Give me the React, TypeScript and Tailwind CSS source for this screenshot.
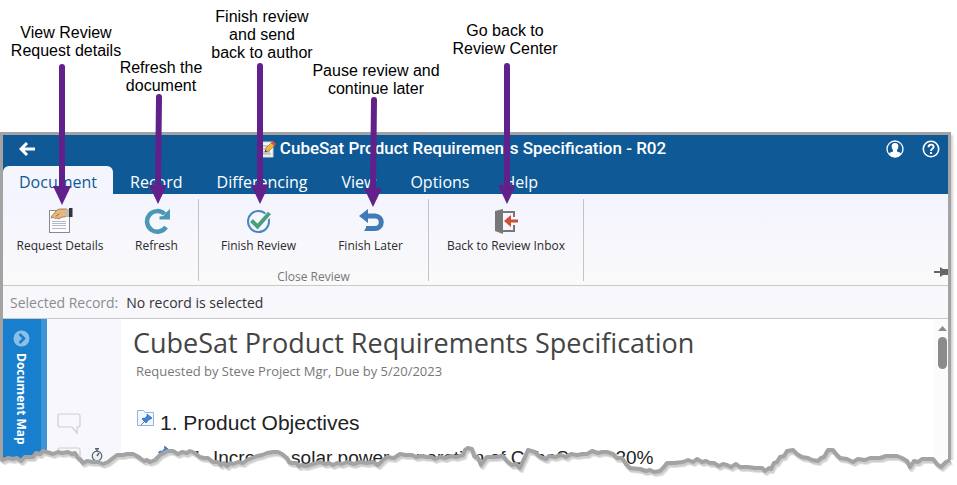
import type { ReactNode } from "react";

const TABS = ["Document", "Record", "Differencing", "View", "Options", "Help"];

const CALLOUTS = [
  { place: "left-[6px] top-[24px] w-[120px]", lines: ["View Review", "Request details"] },
  { place: "left-[101px] top-[59px] w-[120px]", lines: ["Refresh the", "document"] },
  { place: "left-[202px] top-[8px] w-[120px]", lines: ["Finish review", "and send", "back to author"] },
  { place: "left-[306px] top-[62px] w-[140px]", lines: ["Pause review and", "continue later"] },
  { place: "left-[445px] top-[22px] w-[120px]", lines: ["Go back to", "Review Center"] },
];

const ARROWS = [
  { x1: 62, y1: 67, x2: 62, tip: 204 },
  { x1: 159, y1: 97, x2: 158, tip: 203 },
  { x1: 260, y1: 66, x2: 260, tip: 203 },
  { x1: 374, y1: 100, x2: 373, tip: 206 },
  { x1: 507, y1: 66, x2: 507, tip: 203 },
];

const TEAR =
  "M0 18 3 20 8 18 13 19 17 18 21 21 25 17 33 17 36 13 40 14 43 11 50 13 53 14 58 12 62 13 68 12 72 14 75 13 78 18 80 19 83 23 87 21 93 22 98 22 103 24 108 22 113 18 117 15 123 15 127 14 133 14 137 16 140 18 144 21 147 20 150 22 155 20 158 17 160 15 164 13 168 11 173 11 178 14 182 12 187 13 190 11 195 13 200 17 204 18 208 18 213 22 218 22 221 25 224 23 227 26 230 23 233 24 238 22 243 23 247 20 252 18 257 16 262 15 267 13 273 12 278 12 282 14 287 18 289 22 292 23 296 23 299 26 302 25 306 26 313 24 320 22 325 24 329 23 333 25 337 23 342 24 347 22 354 24 360 22 367 23 373 22 378 25 383 20 387 17 394 18 400 14 406 15 412 15 416 17 422 16 427 17 431 17 435 19 440 17 445 18 451 16 456 17 463 15 465 10 468 8 472 9 474 16 478 18 481 25 485 19 487 17 495 17 503 16 507 21 512 25 516 24 520 28 523 21 525 17 528 10 535 12 539 16 543 18 546 19 549 16 555 17 561 15 566 17 571 14 577 15 583 14 587 14 592 11 598 13 602 12 607 12 613 14 617 18 622 18 626 24 630 28 640 29 646 31 650 30 654 32 660 31 664 27 667 23 674 23 683 22 688 20 693 22 697 19 702 22 706 21 710 23 714 23 719 26 723 24 727 25 731 27 736 24 740 27 748 27 755 28 762 28 765 31 769 28 771 29 774 23 777 22 780 17 784 16 787 11 793 10 797 14 802 17 808 18 812 20 818 21 821 18 824 17 828 10 833 10 836 14 840 18 847 19 853 22 858 19 865 20 870 18 880 18 886 16 897 16 902 18 907 21 910 27 914 21 918 22 922 19 933 19 937 24 941 27 946 22 950 20";

function Callouts() {
  return (
    <section className="relative h-[132px] font-['Liberation_Sans',Arial,sans-serif] text-base leading-[18px] text-black">
      {CALLOUTS.map((c) => (
        <p key={c.lines[0]} className={`absolute text-center ${c.place}`}>
          {c.lines.map((l) => (
            <span key={l} className="block whitespace-nowrap">{l}</span>
          ))}
        </p>
      ))}
    </section>
  );
}

function Arrows() {
  return (
    <svg className="pointer-events-none absolute top-0 left-0 z-20" width="560" height="210" fill="#62208b" aria-hidden="true">
      {ARROWS.map((a) => (
        <g key={a.x1}>
          <line x1={a.x1} y1={a.y1} x2={a.x2} y2={a.tip - 16} stroke="#62208b" strokeWidth="6" strokeLinecap="round" />
          <path d={`M${a.x2 - 9} ${a.tip - 18}h18l-9 19z`} />
        </g>
      ))}
    </svg>
  );
}

function RequestIcon() {
  return (
    <svg width="26" height="26" viewBox="0 0 26 26" aria-hidden="true">
      <rect x="2.500" y="2.500" width="20" height="22" fill="#fdfdfd" stroke="#8a8a8a" />
      <path d="M5 13.500h14M5 15.500h14M5 17.500h14M5 20.500h14" stroke="#b3b8cf" strokeWidth="1" />
      <path d="M4 9.500c.5-2 3-3.500 5-6.500 1-1.500 3-2 5-2h6v7c-2 1-3 1-4 1l-2 .5-2 1.500-2-1-2 .5-1-1-2 .5z" fill="#e8b780" stroke="#9a6a3a" strokeWidth=".8" />
      <path d="M9 8.500l3-3" stroke="#8d5b2d" fill="none" />
      <path d="M19 1h3v8h-3z" fill="#b8bcc4" />
      <path d="M22 0h3.500v9H22z" fill="#333" />
    </svg>
  );
}

function RefreshIcon() {
  return (
    <svg width="26" height="26" viewBox="0 0 26 26" aria-hidden="true">
      <path d="M20.500 6A10.300 10.300 0 1 0 22 19" fill="none" stroke="#4b98b6" strokeWidth="4.500" />
      <path d="M26 1v10.500H15.500V8.500l4 -.5 2-3z" fill="#4b98b6" />
    </svg>
  );
}

function FinishIcon() {
  return (
    <svg width="26" height="26" viewBox="0 0 26 26" fill="none" aria-hidden="true">
      <circle cx="12.500" cy="13.500" r="10.500" stroke="#4a86c5" strokeWidth="2" />
      <path d="M6 13l5.500 5.500L24 5" stroke="#f5f6fd" strokeWidth="6" />
      <path d="M5.500 12.500l6 6L23.500 5" stroke="#4a9f7d" strokeWidth="4" />
    </svg>
  );
}

function LaterIcon() {
  return (
    <svg width="26" height="26" viewBox="0 0 26 26" aria-hidden="true">
      <path d="M8 8h9a6 6 0 0 1 0 12.500H8" fill="none" stroke="#3f7bb6" strokeWidth="5" />
      <path d="M1 8l9-7v14z" fill="#3f7bb6" />
      <path d="M9 18h5v5H6z" fill="#3f7bb6" />
    </svg>
  );
}

function InboxIcon() {
  return (
    <svg width="26" height="26" viewBox="0 0 26 26" aria-hidden="true">
      <path d="M10 4h11v5M21 17v6H10" fill="none" stroke="#777" strokeWidth="2" />
      <path d="M2 3l8-2v25l-8-3z" fill="#777" />
      <path d="M11 13l7-6v4.500h7v3h-7V19z" fill="#cf4f35" />
    </svg>
  );
}

function RibbonButton({ icon, label, className }: { icon: ReactNode; label: string; className: string }) {
  return (
    <button type="button" className={`flex flex-col items-center gap-1 text-xs leading-4 whitespace-nowrap text-[#2b2b2b] ${className}`}>
      {icon}
      {label}
    </button>
  );
}

function Header() {
  return (
    <header className="bg-[#0f5a96] text-white">
      <div className="flex h-[31px] items-center">
        <button type="button" aria-label="Back" className="ml-4 w-[30px]">
          <svg width="18" height="18" viewBox="0 0 18 18" fill="none" stroke="#fff" strokeWidth="3" aria-hidden="true">
            <path d="M16 7H3M8 1L2 7l6 6" />
          </svg>
        </button>
        <h1 className="flex flex-1 items-center justify-center gap-1 pr-[42px] pb-[3px] pl-8 font-[Roboto,sans-serif] text-[17px] font-medium whitespace-nowrap">
          <svg width="17" height="18" viewBox="0 0 17 18" aria-hidden="true">
            <path d="M1 2h13v15H1z" fill="#f6f6f2" stroke="#cfd3d8" />
            <path d="M3 6h6M3 9h5M3 12h8M3 14h9" stroke="#8b99a6" />
            <path d="M6 12l1-4 6-6 3 3-6 6z" fill="#efb73e" stroke="#936820" strokeWidth=".6" />
            <path d="M12 3l2-2 3 3-2 2z" fill="#e34b3d" />
            <path d="M6 12l.5-2 1.500 1.500z" fill="#222" />
          </svg>
          CubeSat Product Requirements Specification - R02
        </h1>
        <div className="flex gap-[18px] pr-2 pb-1">
          <button type="button" aria-label="Account">
            <svg width="18" height="18" viewBox="0 0 18 18" aria-hidden="true">
              <circle cx="9" cy="9" r="8" fill="none" stroke="#fff" strokeWidth="1.300" />
              <path d="M9 3c2.500 0 3.500 1.500 3.300 4-.1 1.500-.8 2.400-1.300 3v1.500l4 1.500c-1.500 3-3.500 4-6 4s-4.500-1-6-4l4-1.500V10C6.500 9.400 5.800 8.500 5.700 7 5.500 4.500 6.500 3 9 3z" fill="#fff" />
            </svg>
          </button>
          <button type="button" aria-label="Help">
            <svg width="18" height="18" viewBox="0 0 18 18" fill="none" stroke="#fff" aria-hidden="true">
              <circle cx="9" cy="9" r="7.700" strokeWidth="1.600" />
              <path d="M6.500 7.200C6.500 3.700 11.600 3.900 11.600 7c0 1.800-2.600 1.900-2.600 4M9 12v2" strokeWidth="1.900" />
            </svg>
          </button>
        </div>
      </div>
      <nav className="flex h-7 text-base leading-7">
        {TABS.map((t, i) => (
          <button
            key={t}
            type="button"
            className={i === 0 ? "rounded-t-md bg-[#f5f5fe] px-4 pt-[2px] text-[#0f5a96]" : "px-[17px] pt-[2px]"}
          >
            {t}
          </button>
        ))}
      </nav>
    </header>
  );
}

function Ribbon() {
  return (
    <div className="flex h-[92px] border-b border-[#c8c8c8] bg-linear-to-b from-[#f4f4ff] to-[#fafafa] pt-[5px] pb-1">
      <div className="flex w-[196px] items-start border-r border-[#c4c4c4] pt-[9px]">
        <RibbonButton icon={<RequestIcon />} label="Request Details" className="w-[114px]" />
        <RibbonButton icon={<RefreshIcon />} label="Refresh" className="w-[79px]" />
      </div>
      <div className="flex w-[230px] flex-col border-r border-[#c4c4c4] pt-[9px]">
        <div className="flex">
          <RibbonButton icon={<FinishIcon />} label="Finish Review" className="w-[119px]" />
          <RibbonButton icon={<LaterIcon />} label="Finish Later" className="w-[105px]" />
        </div>
        <span className="mt-[15px] text-center text-xs leading-4 text-[#777]">Close Review</span>
      </div>
      <div className="flex w-[155px] items-start justify-center border-r border-[#c4c4c4] pt-[9px]">
        <RibbonButton icon={<InboxIcon />} label="Back to Review Inbox" className="w-[150px]" />
      </div>
      <button type="button" aria-label="Pin the ribbon" className="ml-auto self-end pb-1">
        <svg width="14" height="10" viewBox="0 0 14 10" fill="#666" aria-hidden="true">
          <path d="M0 4h6V0l3 2h5v6H9l-3 2V6H0z" />
        </svg>
      </button>
    </div>
  );
}

function CommentIcon() {
  return (
    <svg width="24" height="22" viewBox="0 0 24 22" fill="none" stroke="#cfcfcf" strokeWidth="1.200" aria-hidden="true">
      <path d="M3 1h18q2 0 2 2v9q0 2-2 2h-1v6l-5-6H3q-2 0-2-2V3q0-2 2-2z" />
    </svg>
  );
}

function Pin() {
  return (
    <g>
      <path d="M1 12l4-4" stroke="#777" strokeWidth="1" />
      <path d="M7 1l5 4-1 1-2 .5L7 9 6 10 2 6l1-1 2 .2L7 3z" fill="#3f82dc" stroke="#1e5fb8" strokeWidth=".6" />
    </g>
  );
}

function DocumentBody() {
  return (
    <div className="flex h-[158px] bg-white">
      <button type="button" className="flex w-11 shrink-0 flex-col items-center gap-[6px] border-r-[6px] border-[#3d95d8] bg-[#177fce] pt-[11px] pr-[2px] text-white">
        <svg width="17" height="17" viewBox="0 0 17 17" aria-hidden="true">
          <circle cx="8.500" cy="8.500" r="8" fill="#8bbfe8" />
          <path d="M6.500 4l4.500 4.500L6.500 13" fill="none" stroke="#177fce" strokeWidth="2.500" />
        </svg>
        <span className="text-xs leading-4 font-bold whitespace-nowrap [writing-mode:vertical-rl]">Document Map</span>
      </button>
      <div className="w-[74px] shrink-0 bg-[#f7f7fd] pt-[94px] pl-[10px]">
        <CommentIcon />
        <div className="mt-3 flex gap-[10px]">
          <CommentIcon />
          <svg width="12" height="14" viewBox="0 0 12 14" fill="none" stroke="#59626b" className="mt-px" aria-hidden="true">
            <circle cx="6" cy="8" r="4.800" fill="#e8f1f6" strokeWidth="1.200" />
            <path d="M4 .8h4M6 1v3M6 8l2-3" strokeWidth="1.400" />
          </svg>
        </div>
      </div>
      <article className="min-w-0 flex-1 pt-[6px] pl-3 whitespace-nowrap">
        <h2 className="text-[27px] leading-9 text-[#444]">CubeSat Product Requirements Specification</h2>
        <p className="pt-[2px] pl-[3px] text-[13px] leading-4 text-[#777]">Requested by Steve Project Mgr, Due by 5/20/2023</p>
        <h3 className="mt-[31px] flex gap-[6px] pl-1 font-['Liberation_Sans',Arial,sans-serif] text-[21px] leading-[26px] text-[#222]">
          <svg width="17" height="17" viewBox="0 0 17 17" aria-hidden="true">
            <path d="M.5 3.500v-3h6l1.500 2h8.500v13H.5z" fill="#f3f8fe" stroke="#8fb4e3" />
            <g transform="translate(3 3)"><Pin /></g>
          </svg>
          1. Product Objectives
        </h3>
        <h4 className="mt-[9px] flex gap-1 pl-[23px] font-['Liberation_Sans',Arial,sans-serif] text-[19px] leading-[26px] text-[#222]">
          <svg width="16" height="16" viewBox="0 0 13 13" aria-hidden="true"><Pin /></svg>
          1.1. Increase solar power generation of CubeSat by 20%
        </h4>
      </article>
      <div className="flex w-[15px] flex-col items-center gap-[6px] bg-[#fbfbfb] pt-[7px] pl-1" aria-hidden="true">
        <svg width="9" height="5" viewBox="0 0 9 5" fill="#8b8b8b"><path d="M0 5l4.500-5L9 5z" /></svg>
        <div className="h-8 w-[9px] rounded-full bg-[#8b8b8b]" />
      </div>
    </div>
  );
}

function TornEdge() {
  return (
    <svg className="pointer-events-none absolute bottom-0 left-0 z-10 h-[45px] w-full" viewBox="0 0 957 45" preserveAspectRatio="none" fill="none" strokeLinejoin="round" aria-hidden="true">
      <path d={`${TEAR}H957V45H0z`} fill="#fff" />
      <path d={TEAR} transform="translate(2 3)" stroke="#e2e2e2" strokeWidth="4" />
      <path d={TEAR} transform="translate(1 2)" stroke="#cdcdcd" strokeWidth="4" />
      <path d={TEAR} stroke="#a3a3a3" strokeWidth="4" />
    </svg>
  );
}

export default function App() {
  return (
    <div className="relative overflow-hidden bg-white font-['Open_Sans','Noto_Sans',sans-serif]">
      <Callouts />
      <main className="mr-[6px] border-x-[3px] border-t-[3px] border-[#a3a3a3] shadow-[2px_3px_2px_#d4d4d4]">
        <Header />
        <Ribbon />
        <div className="flex h-[33px] items-center gap-2 border-b border-[#c8c8c8] bg-[#f7f7fc] px-[7px] pt-px text-sm">
          <span className="text-[#8c8c8c]">Selected Record:</span>
          <span className="text-[#333]">No record is selected</span>
        </div>
        <DocumentBody />
      </main>
      <div className="h-[8px]" />
      <TornEdge />
      <Arrows />
    </div>
  );
}
